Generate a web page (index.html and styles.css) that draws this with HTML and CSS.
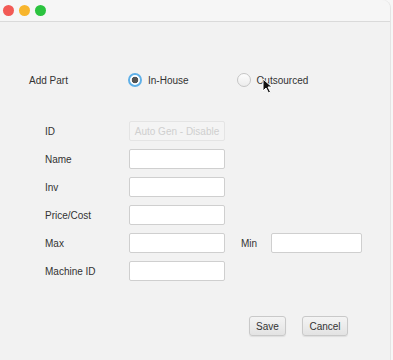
FILE: index.html
```html
<!DOCTYPE html>
<html lang="en">
<head>
  <meta charset="UTF-8">
  <meta name="viewport" content="width=device-width, initial-scale=1.0">
  <title>Add Part</title>
  <link rel="stylesheet" href="styles.css">
</head>
<body>
  <div class="window">
    <div class="titlebar">
      <span class="dot red"></span>
      <span class="dot yellow"></span>
      <span class="dot green"></span>
    </div>

    <div class="content">
      <div class="header">
        <span class="title">Add Part</span>
        <label class="radio">
          <span class="circle selected"></span>
          <span>In-House</span>
        </label>
        <label class="radio outsourced">
          <span class="circle"></span>
          <span>Outsourced</span>
          <svg class="cursor" width="11" height="16" viewBox="0 0 11 16">
            <path d="M1 1 L1 13 L4 10 L6.5 15 L8.5 14 L6 9 L10 9 Z" fill="#111" stroke="#fff" stroke-width="1"/>
          </svg>
        </label>
      </div>

      <div class="form">
        <span class="lbl">ID</span>
        <div class="field disabled">Auto Gen - Disable</div>
        <span></span><span></span><span></span>

        <span class="lbl">Name</span>
        <div class="field"></div>
        <span></span><span></span><span></span>

        <span class="lbl">Inv</span>
        <div class="field"></div>
        <span></span><span></span><span></span>

        <span class="lbl">Price/Cost</span>
        <div class="field"></div>
        <span></span><span></span><span></span>

        <span class="lbl">Max</span>
        <div class="field"></div>
        <span></span>
        <span class="lbl">Min</span>
        <div class="field"></div>

        <span class="lbl">Machine ID</span>
        <div class="field"></div>
        <span></span><span></span><span></span>
      </div>

      <div class="actions">
        <button class="btn save">Save</button>
        <button class="btn cancel">Cancel</button>
      </div>
    </div>
  </div>
</body>
</html>
```

FILE: styles.css
```css
body {
  margin: 0;
  background: #f7f7f7;
  font-family: "Liberation Sans", Arial, sans-serif;
  color: #333;
}
.window {
  width: 390px;
  height: 360px;
  background: #f2f2f2;
  border-top-right-radius: 8px;
  overflow: hidden;
  box-shadow: 1px 0 0 #e4e4e4;
}
.titlebar {
  height: 21px;
  background: #f6f6f6;
  border-bottom: 1px solid #dadada;
  display: flex;
  align-items: center;
  gap: 5px;
  padding-left: 3px;
}
.dot {
  width: 11px;
  height: 11px;
  border-radius: 50%;
}
.red { background: #f25a55; }
.yellow { background: #f7b52d; }
.green { background: #2bc33f; }

.content {
  padding: 48px 0 0 29px;
}
.header {
  display: flex;
  align-items: center;
  height: 20px;
  font-size: 10px;
}
.title {
  width: 99px;
}
.radio {
  display: flex;
  align-items: center;
  gap: 6px;
  position: relative;
}
.radio.outsourced {
  margin-left: 48px;
}
.circle {
  width: 12px;
  height: 12px;
  border-radius: 50%;
  border: 1px solid #c5c5c5;
  background: linear-gradient(#fdfdfd, #ececec);
  box-sizing: content-box;
}
.circle.selected {
  width: 10px;
  height: 10px;
  border: 2px solid #5fb0e8;
  background: radial-gradient(circle, #555 0, #555 3px, #fff 3.6px);
}
.cursor {
  position: absolute;
  left: 25px;
  top: 5px;
}

.form {
  display: grid;
  grid-template-columns: 84px 96px 16px 30px 91px;
  grid-auto-rows: 20px;
  row-gap: 8px;
  margin: 31px 0 0 16px;
  font-size: 10px;
  align-items: center;
}
.field {
  height: 18px;
  background: #fff;
  border: 1px solid #cfcfcf;
  border-radius: 2px;
}
.field.disabled {
  background: #f4f4f4;
  border-color: #e4e4e4;
  color: #cfcfcf;
  display: flex;
  align-items: center;
  justify-content: center;
  font-size: 10px;
}

.actions {
  display: flex;
  gap: 16px;
  margin: 35px 0 0 220px;
}
.btn {
  height: 20px;
  padding: 0 6px;
  font-family: "Liberation Sans", Arial, sans-serif;
  font-size: 10px;
  color: #333;
  background: linear-gradient(#f4f4f4, #e3e3e3);
  border: 1px solid #c9c9c9;
  border-radius: 3px;
  box-shadow: 0 1px 1px rgba(0, 0, 0, 0.08);
}
.save { width: 37px; }
.cancel { width: 46px; }
```
